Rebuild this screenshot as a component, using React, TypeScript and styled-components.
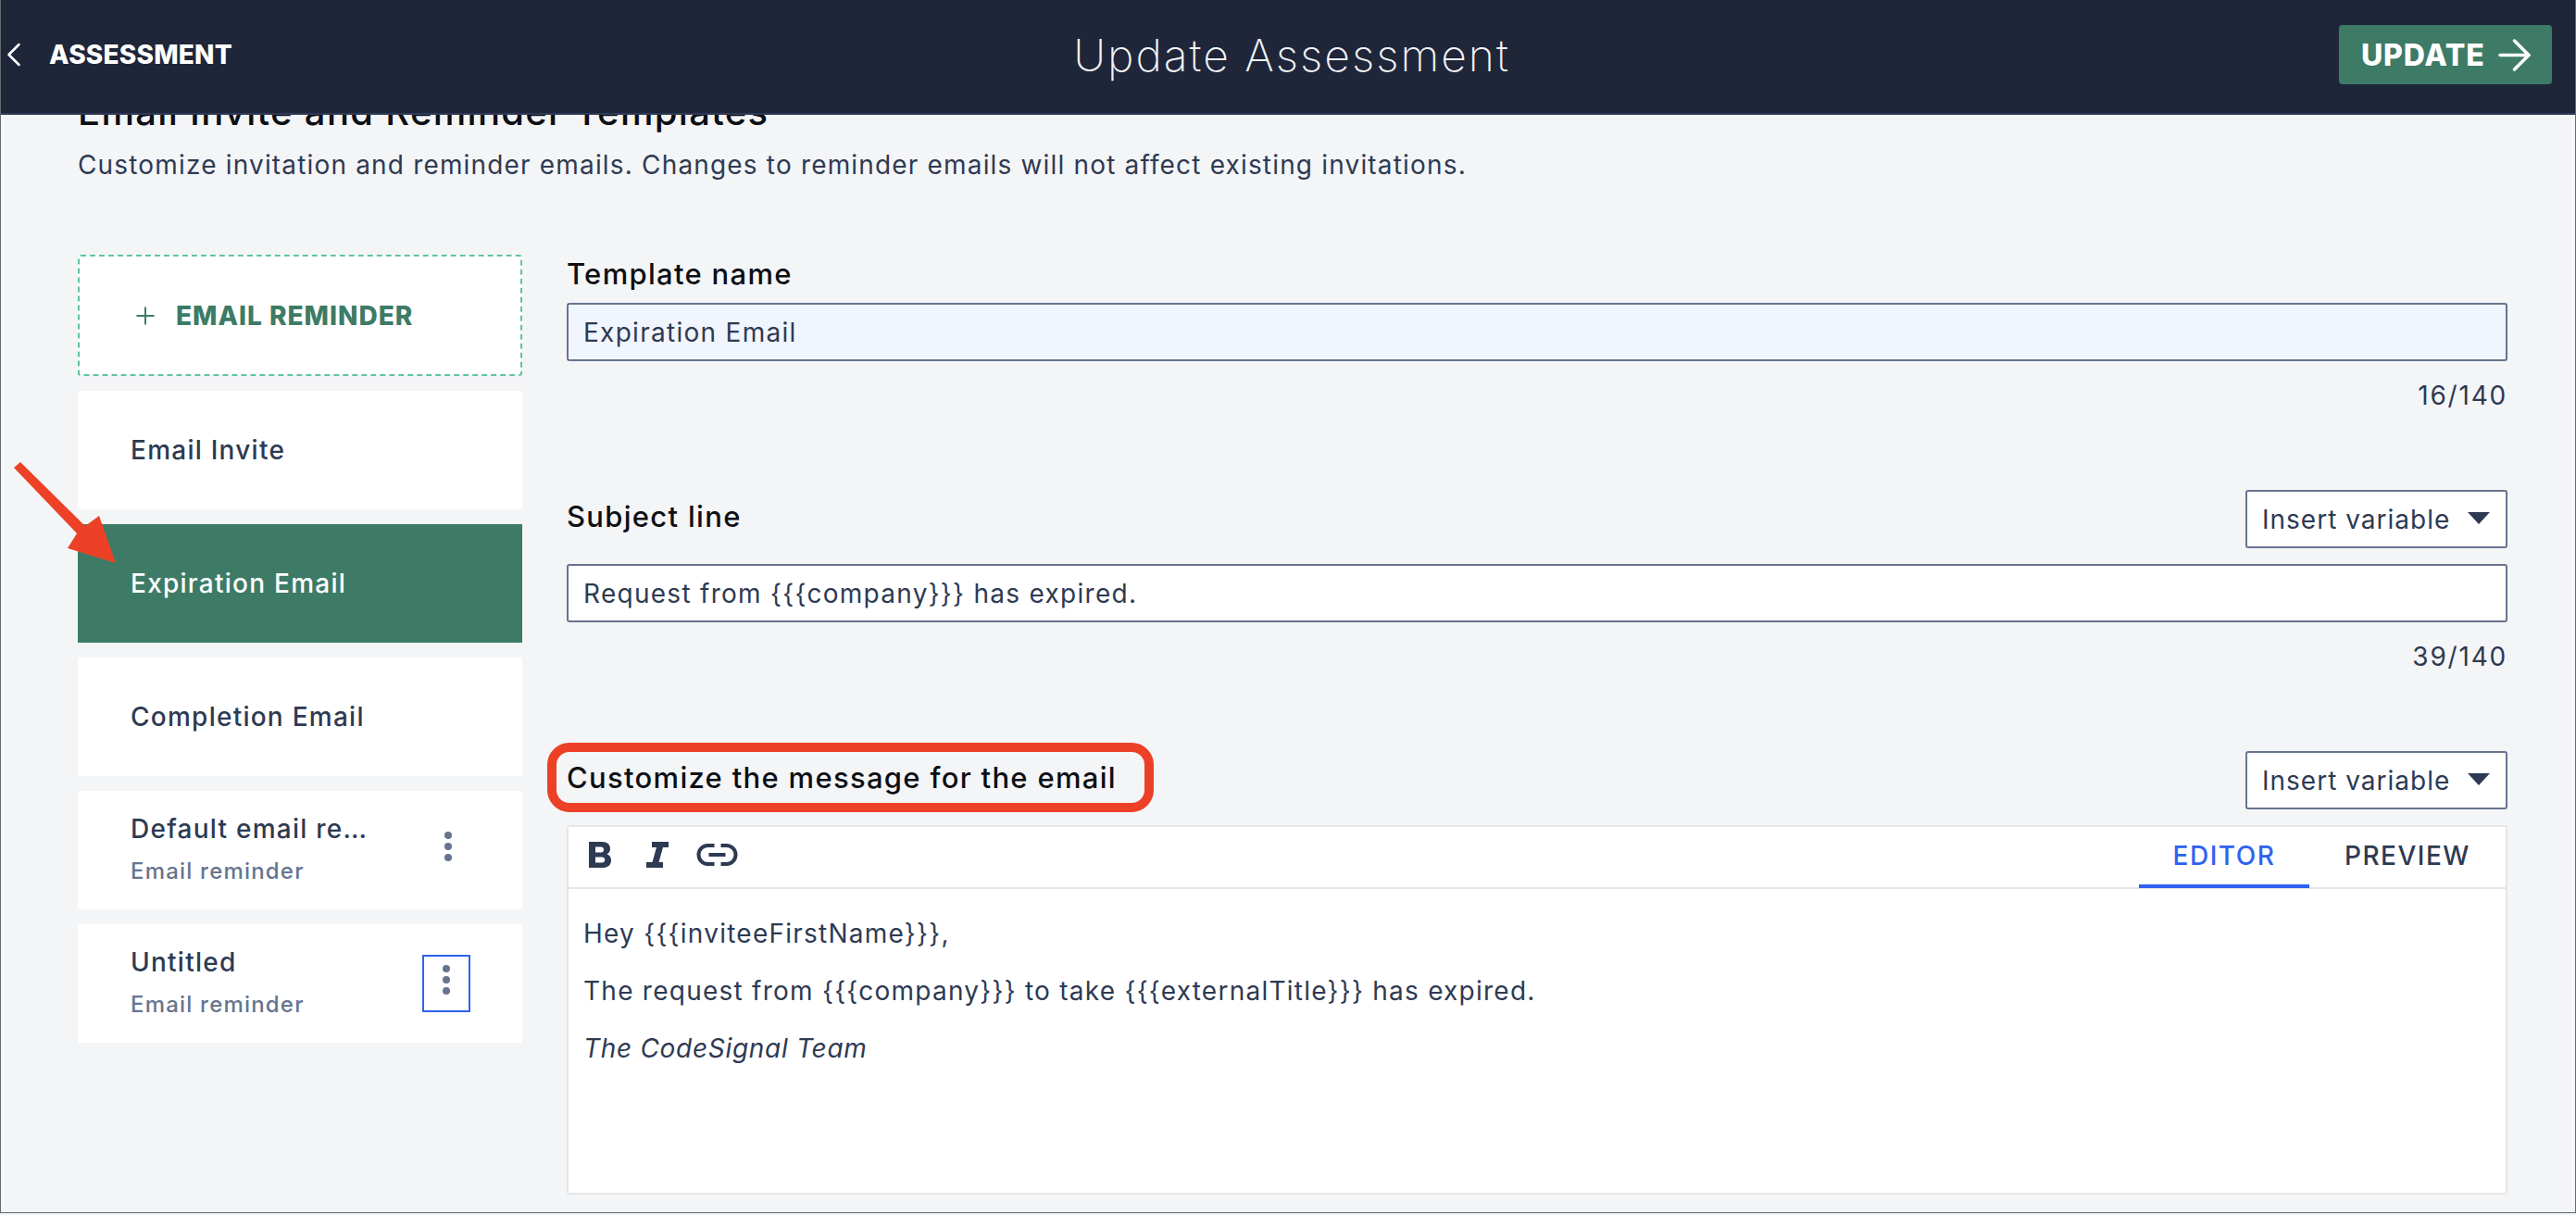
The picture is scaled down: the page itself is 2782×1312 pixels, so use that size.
import React from 'react'
import styled, { createGlobalStyle } from 'styled-components'
import { ArrowRight, ChevronLeft, Plus } from 'lucide-react'

const FONT = `Inter, "Noto Sans", "Liberation Sans", sans-serif`

const GlobalStyle = createGlobalStyle`
  html, body {
    margin: 0;
    padding: 0;
    background: #f4f5f7;
  }
  * {
    box-sizing: border-box;
  }
`

const Frame = styled.div`
  position: relative;
  width: 2782px;
  height: 1310px;
  display: flex;
  flex-direction: column;
  overflow: hidden;
  border: 1px solid #666a70;
  border-top: 0;
  background: #f4f5f7;
  font-family: ${FONT};
  color: #2e3a52;
`

const TopBar = styled.header`
  flex: 0 0 124px;
  display: grid;
  grid-template-columns: 1fr auto 1fr;
  align-items: center;
  padding: 0 25px 4px 7px;
  background: #1f2639;
  border-bottom: 2px solid #2f3a55;
`

const BackLink = styled.div`
  display: flex;
  align-items: center;
  gap: 16px;
  font-size: 28px;
  font-weight: 800;
  color: #fff;
  letter-spacing: 0.2px;
`

const BackIcon = styled(ChevronLeft)`
  margin-left: -15px;
`

const PageTitle = styled.div`
  padding-left: 26px;
  font-size: 48px;
  font-weight: 200;
  letter-spacing: 2px;
  color: #f2f3f5;
`

const UpdateButton = styled.div`
  justify-self: end;
  width: 230px;
  height: 64px;
  display: flex;
  align-items: center;
  gap: 5px;
  padding-left: 24px;
  background: #3d7b66;
  border-radius: 4px;
  font-size: 32px;
  font-weight: 800;
  letter-spacing: 0.8px;
  color: #fff;
`

const Content = styled.main`
  flex: 1;
  min-height: 0;
  overflow: hidden;
  padding: 0 73px 0 83px;
`

const Heading = styled.h1`
  margin: -25px 0 0;
  font-size: 40px;
  line-height: 44px;
  font-weight: 500;
  letter-spacing: 1.3px;
  color: #0d0f14;
`

const Intro = styled.p`
  margin: 18px 0 0;
  font-size: 28px;
  line-height: 34px;
  font-weight: 400;
  letter-spacing: 1.17px;
  color: #2e3a52;
`

const Columns = styled.div`
  display: grid;
  grid-template-columns: 480px 1fr;
  column-gap: 48px;
  margin-top: 80px;
`

const Sidebar = styled.aside`
  display: flex;
  flex-direction: column;
  gap: 16px;
`

const AddReminder = styled.div`
  height: 131px;
  display: flex;
  align-items: center;
  gap: 18px;
  padding-left: 56px;
  background: #fff;
  border: 2px dashed #5ec4a1;
  border-radius: 3px;
  color: #3d7b66;
  font-size: 28px;
  font-weight: 800;
  letter-spacing: 1px;
`

const TemplateItem = styled.div<{ $active?: boolean }>`
  height: 128px;
  display: flex;
  align-items: center;
  justify-content: space-between;
  padding: 0 56px 0 57px;
  background: ${(p) => (p.$active ? '#3d7b66' : '#fff')};
  color: ${(p) => (p.$active ? '#fff' : '#2e3a52')};
`

const ItemText = styled.div`
  display: flex;
  flex-direction: column;
  gap: 15px;
  padding-bottom: 4px;
`

const ItemTitle = styled.div`
  font-size: 28px;
  line-height: 34px;
  font-weight: 500;
  letter-spacing: 1.25px;
`

const ItemKind = styled.div`
  font-size: 24px;
  line-height: 28px;
  font-weight: 500;
  letter-spacing: 1.2px;
  color: #66748f;
`

const MenuButton = styled.div<{ $focused?: boolean }>`
  width: 52px;
  height: 62px;
  margin-right: ${(p) => (p.$focused ? '0' : '-2px')};
  padding-bottom: 8px;
  display: flex;
  flex-direction: column;
  align-items: center;
  justify-content: center;
  gap: 4px;
  border: 2px solid ${(p) => (p.$focused ? '#2f62f0' : 'transparent')};
`

const Dot = styled.span`
  width: 8px;
  height: 8px;
  border-radius: 50%;
  background: #66748f;
`

const Form = styled.div`
  display: flex;
  flex-direction: column;
  padding-top: 4px;
`

const Section = styled.section<{ $top?: number }>`
  margin-top: ${(p) => p.$top ?? 0}px;
`

const LabelRow = styled.div`
  min-height: 63px;
  margin-bottom: 17px;
  display: flex;
  align-items: center;
  justify-content: space-between;
`

const Label = styled.label`
  display: block;
  font-size: 31px;
  line-height: 34px;
  font-weight: 500;
  letter-spacing: 1.3px;
  color: #0d0f14;
`

const NameLabel = styled(Label)`
  margin-bottom: 14px;
`

const RowLabel = styled(Label)`
  margin-bottom: 5px;
`

const Field = styled.div<{ $filled?: boolean }>`
  height: 63px;
  display: flex;
  align-items: center;
  padding: 0 16px;
  background: ${(p) => (p.$filled ? '#f1f5fd' : '#fff')};
  border: 2px solid #66748f;
  border-radius: 3px;
  font-size: 28px;
  letter-spacing: 1.28px;
`

const Counter = styled.div`
  margin-top: 20px;
  text-align: right;
  font-size: 28px;
  line-height: 34px;
  letter-spacing: 1.8px;
`

const VariableSelect = styled.div`
  width: 283px;
  height: 63px;
  display: flex;
  align-items: center;
  justify-content: space-between;
  padding: 0 17px 0 16px;
  background: #fff;
  border: 2px solid #66748f;
  border-radius: 3px;
  font-size: 28px;
  letter-spacing: 1px;
`

const Caret = styled.svg`
  width: 24px;
  height: 13px;
  margin-top: -3px;
  fill: #2e3a52;
`

const Editor = styled.div`
  height: 399px;
  background: #fff;
  border: 2px solid #e5e6e8;
  border-radius: 3px;
`

const EditorBar = styled.div`
  height: 67px;
  display: flex;
  align-items: center;
  justify-content: space-between;
  border-bottom: 2px solid #e5e6e8;
`

const Tools = styled.div`
  display: flex;
  align-items: center;
  gap: 38px;
  padding: 0 0 6px 22px;
`

const ToolIcon = styled.svg`
  display: block;
  fill: #2e3a52;
`

const LinkIcon = styled(ToolIcon)`
  margin-left: -8px;
`

const Tabs = styled.div`
  display: flex;
  height: 65px;
  margin-bottom: -1px;
`

const Tab = styled.div<{ $active?: boolean }>`
  width: ${(p) => (p.$active ? '184px' : '212px')};
  display: flex;
  align-items: center;
  justify-content: center;
  font-size: 28px;
  font-weight: 500;
  letter-spacing: 1.5px;
  color: ${(p) => (p.$active ? '#2f62f0' : '#2e3a52')};
  border-bottom: 4px solid ${(p) => (p.$active ? '#2f62f0' : 'transparent')};
`

const EditorBody = styled.div`
  padding: 31px 16px 0;
  display: flex;
  flex-direction: column;
  gap: 28px;
  font-size: 28px;
  line-height: 34px;
  letter-spacing: 1.25px;
`

const Signature = styled.div`
  font-style: italic;
  letter-spacing: 0.7px;
`

const Highlight = styled.div`
  position: absolute;
  left: 590px;
  top: 802px;
  width: 655px;
  height: 75px;
  border: 10px solid #ec4126;
  border-radius: 24px;
  pointer-events: none;
`

const ArrowOverlay = styled.svg`
  position: absolute;
  left: -1px;
  top: 490px;
  width: 140px;
  height: 130px;
  fill: #ec4126;
  pointer-events: none;
`

const dots = (
  <>
    <Dot />
    <Dot />
    <Dot />
  </>
)

const InsertVariable = () => (
  <VariableSelect>
    Insert variable
    <Caret viewBox="0 0 24 13">
      <path d="M0 0h24L12 13z" />
    </Caret>
  </VariableSelect>
)

const App = () => (
  <Frame>
    <GlobalStyle />
    <TopBar>
      <BackLink>
        <BackIcon size={44} strokeWidth={1.4} />
        ASSESSMENT
      </BackLink>
      <PageTitle>Update Assessment</PageTitle>
      <UpdateButton>
        UPDATE
        <ArrowRight size={53} strokeWidth={1.6} />
      </UpdateButton>
    </TopBar>

    <Content>
      <Heading>Email Invite and Reminder Templates</Heading>
      <Intro>
        Customize invitation and reminder emails. Changes to reminder emails will not affect
        existing invitations.
      </Intro>

      <Columns>
        <Sidebar>
          <AddReminder>
            <Plus size={30} strokeWidth={1.6} />
            EMAIL REMINDER
          </AddReminder>
          <TemplateItem>
            <ItemTitle>Email Invite</ItemTitle>
          </TemplateItem>
          <TemplateItem $active>
            <ItemTitle>Expiration Email</ItemTitle>
          </TemplateItem>
          <TemplateItem>
            <ItemTitle>Completion Email</ItemTitle>
          </TemplateItem>
          <TemplateItem>
            <ItemText>
              <ItemTitle>Default email re…</ItemTitle>
              <ItemKind>Email reminder</ItemKind>
            </ItemText>
            <MenuButton>{dots}</MenuButton>
          </TemplateItem>
          <TemplateItem>
            <ItemText>
              <ItemTitle>Untitled</ItemTitle>
              <ItemKind>Email reminder</ItemKind>
            </ItemText>
            <MenuButton $focused>{dots}</MenuButton>
          </TemplateItem>
        </Sidebar>

        <Form>
          <Section>
            <NameLabel>Template name</NameLabel>
            <Field $filled>Expiration Email</Field>
            <Counter>16/140</Counter>
          </Section>

          <Section $top={85}>
            <LabelRow>
              <RowLabel>Subject line</RowLabel>
              <InsertVariable />
            </LabelRow>
            <Field>{'Request from {{{company}}} has expired.'}</Field>
            <Counter>39/140</Counter>
          </Section>

          <Section $top={85}>
            <LabelRow>
              <RowLabel>Customize the message for the email</RowLabel>
              <InsertVariable />
            </LabelRow>
            <Editor>
              <EditorBar>
                <Tools>
                  <ToolIcon width="24" height="28" viewBox="0 0 24 28">
                    <path
                      fillRule="evenodd"
                      d="M0 0h14c6 0 9 3 9 7.500 0 2.600-1.300 4.800-3.500 5.800 2.700 1 4.500 3.300 4.500 6.400C24 25 20.500 28 14.500 28H0zM7 5.500v6h6c2 0 3-1.200 3-3s-1-3-3-3zM7 16.500v6h7c2 0 3.200-1.200 3.200-3s-1.200-3-3.200-3z"
                    />
                  </ToolIcon>
                  <ToolIcon width="24" height="28" viewBox="0 0 24 28">
                    <path d="M6 0h18v6h-6l-4.500 16H18v6H0v-6h6.500L11 6H6z" />
                  </ToolIcon>
                  <LinkIcon width="45" height="24" viewBox="0 0 44 24">
                    <path d="M4 12a8 8 0 0 1 8-8h7V0h-7a12 12 0 0 0 0 24h7v-4h-7a8 8 0 0 1-8-8zM13 10v4h18v-4zM32 0h-6v4h6a8 8 0 0 1 0 16h-6v4h6a12 12 0 0 0 0-24z" />
                  </LinkIcon>
                </Tools>
                <Tabs>
                  <Tab $active>EDITOR</Tab>
                  <Tab>PREVIEW</Tab>
                </Tabs>
              </EditorBar>
              <EditorBody>
                <div>{'Hey {{{inviteeFirstName}}},'}</div>
                <div>{'The request from {{{company}}} to take {{{externalTitle}}} has expired.'}</div>
                <Signature>The CodeSignal Team</Signature>
              </EditorBody>
            </Editor>
          </Section>
        </Form>
      </Columns>
    </Content>

    <Highlight />
    <ArrowOverlay viewBox="0 0 140 130">
      <path d="M15 15L22 9L92 78L107 67L125 118L73 102L83 86Z" />
    </ArrowOverlay>
  </Frame>
)

export default App
